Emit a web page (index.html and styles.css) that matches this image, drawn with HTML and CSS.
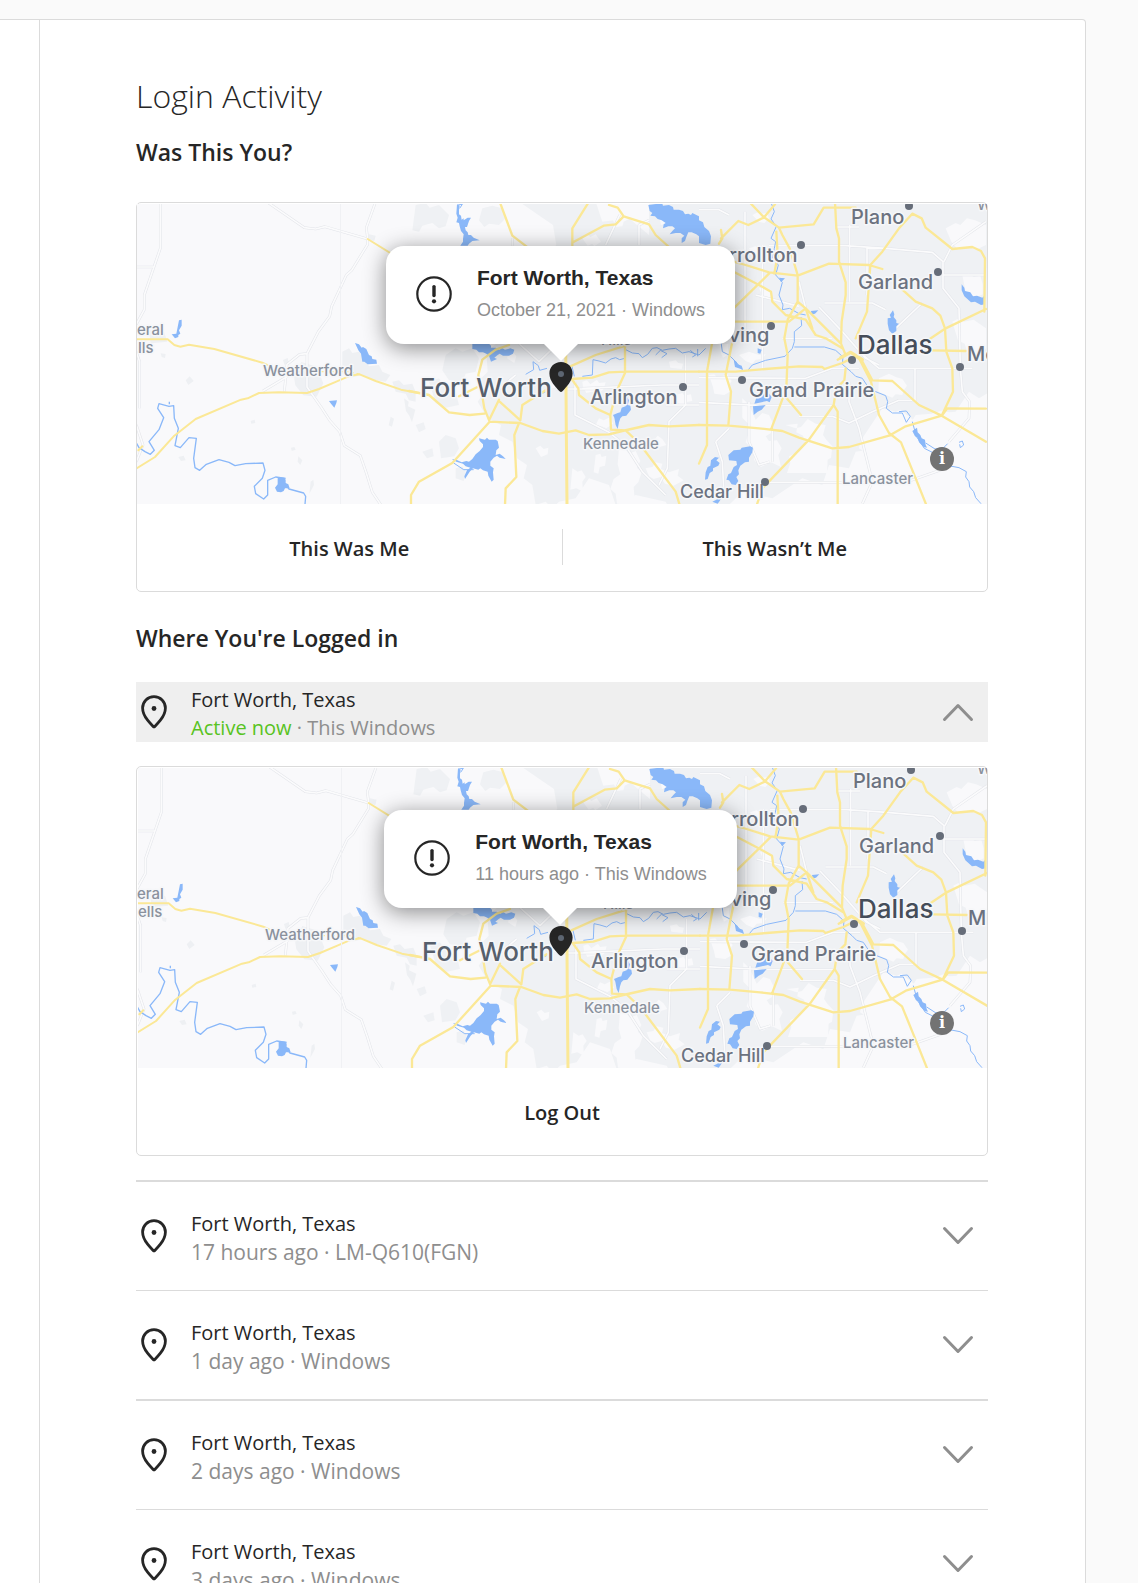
FILE: index.html
```html
<!DOCTYPE html>
<html lang="en">
<head>
  <meta charset="UTF-8" />
  <meta name="viewport" content="width=device-width, initial-scale=1" />
  <title>Login Activity</title>
  <link rel="stylesheet" href="styles.css">
</head>
<body>
  <!-- shared shapes -->
  <svg class="defs" width="0" height="0" aria-hidden="true">
    <symbol id="pin" viewBox="0 0 26 34">
      <path d="M13 1.600C6.600 1.600 1.600 6.600 1.600 13c0 4.400 2 8.400 5 12.200 2 2.600 4.200 4.800 5.600 6.200.5.500 1.100.500 1.600 0 1.400-1.400 3.600-3.600 5.600-6.200 3-3.800 5-7.800 5-12.200C24.400 6.600 19.400 1.600 13 1.600z" fill="none" stroke="#262626" stroke-width="2.800"/>
      <circle cx="13" cy="13.500" r="2.400" fill="#262626"/>
    </symbol>
    <symbol id="chevron" viewBox="0 0 32 20">
      <path d="M2.500 17.500L16 3.500l13.500 14" fill="none" stroke="#8e8e8e" stroke-width="3" stroke-linecap="round" stroke-linejoin="round"/>
    </symbol>
    <symbol id="alert" viewBox="0 0 36 36">
      <circle cx="18" cy="18" r="16.700" fill="none" stroke="#262626" stroke-width="2.200"/>
      <path d="M18 10.600v9" stroke="#262626" stroke-width="3.400" stroke-linecap="round"/>
      <circle cx="18" cy="25.300" r="2.100" fill="#262626"/>
    </symbol>
    <symbol id="marker" viewBox="0 0 24 30">
      <path d="M12 0C5.200 0 .4 5 .4 11.400c0 7.600 6.400 13.600 10.200 17.800.8.900 2 .9 2.800 0 3.800-4.200 10.200-10.200 10.200-17.800C23.600 5 18.800 0 12 0z" fill="#262626"/>
      <circle cx="12" cy="12" r="3" fill="#5d6672"/>
    </symbol>

    <symbol id="terrain" viewBox="0 0 850 300" overflow="hidden">
      <rect width="850" height="300" fill="#f9f9fb"/>

      <!-- built-up land -->
      <g transform="translate(272 -9) scale(.33333)" fill="#eff1f4">
        <path d="M330 20H560l20 60 80-10 60 50V20h1040v560l-50 30-30-20-40 60-120 10-30 50-40-10-40 60-70 10-20 50-60-10-20 60-60-20-90 60-90-20-50 50v60h-60l-30-60-60 40-30-60-90-20-60 30-20-60-60-20-40 60-50 10-20 20-20-20-30 10-10-60-26-20 10-40-30-20-14-50-40-20 6-30-40-20-30-50 20-30-20-30 30-30-4-60 50-40 10-40 60-30 20-60 30-20-20-70 60-60-10-60z"/>
        <path d="M20 30l30-6 12 14 28-8 30 30-10 34-20 6-20-16-30 8-10 18-20-4zM110 480l30-20 20 10 30-10 20 30-10 40-30 6-10 24-40-4-20-30zM60 560l30-10 20 30 30 10 10 40-40 8-30-14zM90 740l20-20 30 10 10 30-14 24-40 6zM140 820l20-6 10 14-6 30-24-8zM220 40l30-8 30 8 10 30-20 20-30-4-14 10-16-20zM20 690l24-8 6 20-20 10zM40 770l30-10 4 24-20 6z"/>
      </g>
      <g transform="translate(-8 -9) scale(.33333)" fill="#eef0f3">
        <path d="M60 405l45 5 10 30-50 5zM95 475l15 2-2 12-10-3zM170 556l12-12 12 14-16 12zM365 678l12-4 2 10-12 2zM148 786l16-4 6 14-14 2zM486 758l10-2 4 8-12 4zM508 784l12 12-6 14-8-10zM495 545l22-44 46 14 20 50-20 40-40-4-24-30zM462 495l14-6 4 16-14 4zM640 470l20-10 10 14 20-4 20 24 10 20 30-4 10 20 24 10-14 20-40-6-30-14-26 6-10-14-24 6zM790 560l20-4 14 14 26-4 10 24v30l-20-4-10-20-30-6zM785 665l10 6-6 24-10-4zM825 610l14 10-2 14 22 10-10 38-8-20-10-14zM545 860l8-6 2 16-14 26zM720 118l20 4-4 16-16-2z"/>
      </g>

      <!-- open patches inside the city -->
      <g transform="translate(272 -9) scale(.33333)" fill="#f9f9fb">
        <path d="M520 130l14-12 10 8 16-8 10 14 6 8-20 14-6-8-14 6zM520 560l14-4 10 12 20-14 6 10 20-2-6 20-16 14-20-6-16 4-10-20zM560 690l10-20 14 6 20-10 8 20-20 14-14-6zM710 820l20-4 10-14 20 4-4 16 24 10 30-10-4 20 18 14-30 16-26-6-14-20-20 6-14-8zM720 740l16-6 10-12 14 10 12 18-20 6-4 10zM630 760l20 4 10 12 20-8 14 30-10 20 14 14-10 30-14 14 4 50h-54l-4-30-16-14 10-30 20-14-8-30zM560 780l14-4 4 10 14-4-4 30-16 4-4 20-14-4zM350 130l14-4 6 10 12 6-10 22-18-10zM800 600l20-6 6 8 20-4 4 20-22 4-8 10-14-8zM490 820l16 10 12-4 12 20-10 14 2 30-20-10-18 4zM750 60l16-2 8 8 18 4-8 20-14-4-14 4zM610 70l20-14 10 4 16-10 8 20-20 10-4 14-20 2zM300 470l14 4 8 10-6 20-22-14zM780 500l20-4 8 8 14 2-4 16-34-4zM400 560l16-4 10 10 16-2-4 14-20 4zM380 760l14-8 10 10 14-4-2 20-20 8z"/>
      </g>
      <g transform="translate(562 -9) scale(.33333)" fill="#f9f9fb">
        <path d="M30 540l16-2 8 10 20-6 8-8 16 24-6 10 4 20-20 12-30-4-4-20zM130 610l20 20 20 44 20-20 20 6 14 30-8 24-16 10 10 14 24-2 14 24-10 20 8 36-30-14-30 14-20-20-6-34-20-20 10-30 4-20-24-24zM260 690l30 10 16-4 20-24 24 14 30 4-8 30 10 14 18 20-4 34-10 6-2 40H264l10-30-4-20 30-14 20-24-8-24-20-10 4-26zM120 480l30-10 30 10 20-2-10 14-20 2-10 12-20-8zM540 550l30-14 20 10 20 6 14 20-10 14-4 14-20-2-10 10-24-10-18-8zM550 640l40 10 14-6 50 40 30 20 4 36 20 14v50l-30 20-14 60-16 42H470l6-30 14-10-14-30-16-10 16-22 20-4-8-24 8-26-16-10 6-24zM790 240l20-4 14 10 20-4 7 26v30l-30 14-20-16zM760 380l20-10 14 10 30-6 37 26v60l-20 20-34-4-10-30-20-10zM690 660l40-14 30 10 40-24 61 30v264H640l6-60 24-24-4-40 20-24zM740 100l30-16 14 6 20-20 24 6 33 14v60l-30 14-24-8-30 8-20-24zM150 160l20-6 14 10 4 26-20 4-4-14zM60 440l14 8 14-2-2 34-14 8-6-14zM180 280l20-2 6 8 14 4-6 24-20-6zM160 60l20-10 8 6 16-2 6 16-14 14-16-4z"/>
      </g>

      <!-- minor roads, drawn twice for the casing -->
      <g fill="none" stroke-linejoin="round">
        <g transform="translate(-8 -9) scale(.33333)">
          <path class="casing" d="M94 20V160L46 300V344L22 388M22 216H74M416 22L526 98 560 102 588 95 716 132 712 98 740 20M716 132V148L668 226 652 240 608 334 602 364 568 410 534 476 512 478 474 508 466 590M534 476V576L576 636 602 676 632 710 646 752 694 782 712 834 730 892 756 930M474 545L402 588M22 470L32 500V640M22 690L42 750 22 800"/>
          <path class="street" d="M94 20V160L46 300V344L22 388M22 216H74M416 22L526 98 560 102 588 95 716 132 712 98 740 20M716 132V148L668 226 652 240 608 334 602 364 568 410 534 476 512 478 474 508 466 590M534 476V576L576 636 602 676 632 710 646 752 694 782 712 834 730 892 756 930M474 545L402 588M22 470L32 500V640M22 690L42 750 22 800"/>
        </g>
        <g transform="translate(272 -9) scale(.33333)">
          <path class="casing" d="M310 130V152M590 150L632 60M690 150V90L720 76M330 446L390 500 440 452M320 540L260 590M498 560V660L600 712 650 752 700 830 770 900M520 580L760 570H870M830 480V630L780 680 775 820 750 870M770 630H870M440 582H560"/>
          <path class="street" d="M310 130V152M590 150L632 60M690 150V90L720 76M330 446L390 500 440 452M320 540L260 590M498 560V660L600 712 650 752 700 830 770 900M520 580L760 570H870M830 480V630L780 680 775 820 750 870M770 630H870M440 582H560"/>
        </g>
        <g transform="translate(562 -9) scale(.33333)">
          <path class="casing" d="M0 44H60L90 60M138 50V440M190 150V520M210 152H440L560 160 700 172 732 200V280L780 340 784 520M452 90V320M504 156V300M732 240H861M735 200L760 150 861 80M0 548L320 550 400 520H480M480 470L540 520H820M648 520V620M0 622L200 632H400M300 664H400L450 684 520 650 600 616H640M450 560V620L480 700 520 860 490 926M150 620V740L180 810 212 800M220 704V800M210 862H620L740 820M784 520L790 590 812 620 810 670 750 740M300 260L320 340M360 336L430 410 500 490 540 510M376 324H520L560 344M670 324L590 400M50 740L70 800 75 900M90 700L50 740M170 300L300 334M250 430H400M410 96H480"/>
          <path class="street" d="M0 44H60L90 60M138 50V440M190 150V520M210 152H440L560 160 700 172 732 200V280L780 340 784 520M452 90V320M504 156V300M732 240H861M735 200L760 150 861 80M0 548L320 550 400 520H480M480 470L540 520H820M648 520V620M0 622L200 632H400M300 664H400L450 684 520 650 600 616H640M450 560V620L480 700 520 860 490 926M150 620V740L180 810 212 800M220 704V800M210 862H620L740 820M784 520L790 590 812 620 810 670 750 740M300 260L320 340M360 336L430 410 500 490 540 510M376 324H520L560 344M670 324L590 400M50 740L70 800 75 900M90 700L50 740M170 300L300 334M250 430H400M410 96H480"/>
        </g>
      </g>

      <!-- lakes -->
      <g fill="#8ab8f9">
        <g transform="translate(-8 -9) scale(.33333)">
          <path d="M150 376l8-2v18l-8 14 4 10-6 4 0 6-10 4-10-12 14-2 4-20zM678 444l12 4 8 10 4-2 10 6 8 18 8 4 2 8 12 2 2 12-28 2-10-8-6 0-4-24-8-10zM600 618l24-2-2 8-6 14-10-12zM446 846l20 2 4 6 0 10 8 4 4 12-14 0-4 8-8 4-12-2-6-12 8-10z"/>
        </g>
        <g transform="translate(272 -9) scale(.33333)">
          <path d="M144 28l8 4-2 12 0 14 6 4 2 12 6-4 0 6 12-8 10 0-6 10-6 18-6 0 2 10 6 6 2 8 8 0 8 8 18 8-22 2-10 8-4 6h-22l8-12 0-8 2-14-8-10-4-14-2-10-8-2 4-14-4-12zM718 30l30-4 12 0 2 6 18-2 12 6 2 8 16 0 12 4 6 10 10-2 8 4 4-6 20 10v60l-8-6-14-6-10 0-6 14-4 12-10 6 0-14 8-8-12-8-14 0-18 4 8-10 8-8-8-6-12 0-16 6 2-12 6-4-12-8-12-4-8-8-14-2 6-8-8-6zM190 446l50 0 6 6 0 6 14 0 12 6 6-6 10 6 16-4 12 4-4 12-12 6-18 0-10-6-6 4-10 8 8 4-18 8-6-18-8-6-10-4-12 0-8-8-12-2zM210 730l18 4 6-6 6 6 20 0 6 4 2 10 2 10-8 8-2 14 12-4 10 8 8 8-18-4-8-6-10 6-10 12 0 12 10 8-2 12 2 22-6 6-10-18-2-12-14-4-8-6-6 4-16-4-10 10-14 22-2-8 8-18 10-8-14-4-8-8-20-6-14-8 14 2 16 8 14-4 8 2 10-8 10-14 12-10 10-12 0-8-10-10zM654 606l6 10-4 14 8 2 2 12-14 18-12 2-6 6-4 12-4 20-6-12-4-22-4-8 14-6 8-2 4-14 12-4z"/>
        </g>
        <g transform="translate(562 -9) scale(.33333)">
          <path d="M0 76l12 6 4 14 14 12 6 16-2 22-14 4-20-6zM582 346l4 12-2 8 8 10 0 8 8 2-8 8 0 14-12 8-10-10-4-20 0-16 10-2-4-8zM788 268l8 10 2 10 16 4 8 12 12-2 16 6 8-8v28l-12 2-18-10-12 2-20-18-8-18zM336 348l22-2-10 10-10 2zM176 460l12 4-4 12-8-2zM104 494l8 6 4 8 12 4 4 12-24-8zM240 248l18 2-12 12zM188 594l14-8 16 20-6 16-8-4-38 8 6-18zM162 634l38-4-12 14-12 6-12 10zM88 780l16-14 20-2 4-6 26-4 8 4-2 14-10 16 0 12-12 2-14 10-6 14 2 12-8 8 6 12-8 12-12-2-8-12-8-2 6-16 8-4 8-18 10-6-2-12-22-2zM48 786l12 2-8 8 10 8-4 8-16 8 0 8-10 6-6 18-8 2 2-22 6-16 8-4 2-16zM40 920l12-6 10-10 8 0-8 14-6 8zM640 708l14-10 2 14 8 8 4 10 10 4 2 16 4 8-10-2-14-14-4-14-8-4z"/>
        </g>
      </g>

      <!-- rivers -->
      <g fill="none" stroke="#8ab8f9" stroke-linejoin="round">
        <g transform="translate(-8 -9) scale(.33333)" stroke-width="4">
          <path d="M20 740L30 758 48 770 64 778 76 766 60 740 90 704 104 668 86 640 90 626 120 634 134 632 136 670 148 700 138 752 154 758 180 728 202 730 194 790 198 818 212 826 232 808 270 794 300 802 318 812 350 806 402 804 408 826 400 850 376 874 380 896 404 912 416 900 416 856 440 846 470 850M466 864L480 882 524 894 530 904 528 928M121 620V628"/>
        </g>
        <g transform="translate(272 -9) scale(.33333)" stroke-width="3">
          <path d="M350 538L374 524 372 500 388 512 392 526 414 520M366 614L410 590M488 510L496 544M520 544L550 540 552 494 570 498 590 504 606 492 620 488 632 494 648 490 650 464 670 474 690 476 700 488 716 478 730 460 744 458 760 466 780 462 800 460 820 474 840 470 870 480M740 480l14-14 20 10-16 12M844 466l16 14-10 6M866 462v22M152 40l8-12-14 2M134 804l30 20 30 0"/>
        </g>
        <g transform="translate(562 -9) scale(.33333)" stroke-width="3">
          <path d="M216 22L226 50 216 72 232 94 216 130 230 140 226 160 220 190 238 210 230 240 250 262 240 300 252 330 250 344 272 340 300 356 320 360M306 366L308 392 286 410 286 440 280 460 258 484 200 496 160 510 148 524M286 456H376L410 466 432 486 430 508 456 530 470 544 490 550 510 580 530 590 560 602 566 620 562 640 580 654 610 654 622 682 634 664 622 648 600 650M640 680L652 724 676 760 700 772 730 780M680 744l28 18 26-4 12-12M748 812L780 818 802 830 800 846 810 860 812 876 824 890 830 908 846 926M780 742l10-4 4 12-10 8-2-10M66 440L70 470 90 480 110 500 130 524M0 480L20 460M66 440l12-10"/>
        </g>
      </g>

      <!-- highways -->
      <g fill="none" stroke="#fbe896" stroke-width="6" stroke-linejoin="round" stroke-linecap="round">
        <g transform="translate(-8 -9) scale(.33333)">
          <path d="M20 433H116L136 450 154 455 180 449 256 462 400 503 424 514M716 132L800 184M20 822L78 786 136 722 200 672 336 614 356 610 390 594 450 592 534 594 570 582 622 560 664 542 692 538 740 558 816 584 870 594M28 766L40 754"/>
          <path d="M505 530H660L692 538" stroke-width="4" stroke-dasharray="18 12"/>
        </g>
        <g transform="translate(272 -9) scale(.33333)" stroke-width="7">
          <path d="M0 588L60 600 120 652 182 660 226 656M150 604L210 574M272 20L310 122 360 160M540 20L490 100V152M492 142L584 92 620 88 644 64 720 88 740 120 780 156M600 30L626 38 644 64M216 580L208 540 220 494 260 464 300 450M216 580L226 640 242 680 334 684 400 708 450 716 500 706 540 720 600 718 640 708 720 690 780 694 870 690M242 680L130 804 30 860 6 900V930M242 672L270 614M272 620L334 676 340 630 410 586M330 684L316 720 322 846 290 880 288 930M484 514L560 480 650 452M488 552L550 548 600 532 650 530H870M488 552L508 580 510 600 560 640 604 660 606 704 650 706 690 744 770 850 800 890 812 930M648 450V534L622 590 604 660"/>
          <path d="M470 440L472 712 474 930" stroke-width="9"/>
        </g>
        <g transform="translate(562 -9) scale(.33333)" stroke-width="7">
          <path d="M60 146L70 130 66 105M66 130L118 78 148 90 194 68 228 28M152 22L194 66 240 98 250 120 272 160 290 220 296 240V320L266 374 256 430 266 480 262 580 240 640 216 704M240 98L344 88 374 38H470M232 110L236 180 226 236M408 22L412 100 420 130V200L440 262V300L428 380 426 446M104 200L140 210 210 232 296 242 390 206 510 210 550 222M104 230L180 270 216 290 220 320 260 360 320 374 350 420 380 430 430 460M104 340L210 236M0 380H270L320 340 426 446 440 480 416 494M296 320L320 340 340 400M640 56L600 100 550 170 514 210 504 350 470 430M640 56L668 70 680 98 760 162 820 156 846 168 858 190 856 350M610 284L650 320 700 340 724 362 738 400 742 470 760 520 762 590 728 662M861 342L740 400 680 440M695 466L800 468M0 530H110L200 522 300 514 370 516 376 522 430 504 470 484 490 500 520 556 580 558 660 630 728 662 861 740M728 662L745 640 861 641M728 662L620 694 570 722 450 756 400 760 300 728 250 708 180 700 90 692 0 690M480 490L516 560 540 660 570 714 606 742 650 850 682 930M404 630L416 650V930M404 630L330 734 190 880 174 928M440 520L436 556 412 580 404 630M40 440L24 530V750L0 806M100 440L80 540 96 590 88 692M260 606L306 660"/>
          <path d="M425 488L455 472 490 494" stroke-width="10"/>
        </g>
      </g>
      <path d="M203.500 0V300" stroke="#f0f1f4"/>
    </symbol>
  </svg>

  <div class="panel">
    <aside class="sidebar"></aside>

    <main class="content">
      <h1>Login Activity</h1>

      <h2>Was This You?</h2>
      <section class="card">
        <div class="map">
          <svg class="map-art" viewBox="0 0 850 300" preserveAspectRatio="xMidYMid slice">
            <use href="#terrain" width="850" height="300"/>
            <g class="labels">
              <text class="town" x="0" y="131">eral</text>
              <text class="town" x="1" y="149">lls</text>
              <text class="town" x="126" y="172">Weatherford</text>
              <text class="town" x="446" y="245">Kennedale</text>
              <text class="town" x="464" y="141">Hills</text>
              <text class="town" x="705" y="280">Lancaster</text>
              <text class="city" x="714" y="20">Plano</text>
              <text class="city" x="566" y="58">Carrollton</text>
              <text class="city" x="721" y="85">Garland</text>
              <text class="city" x="578" y="138">Irving</text>
              <text class="city" x="453" y="200">Arlington</text>
              <text class="city" x="612" y="193">Grand Prairie</text>
              <text class="city small" x="543" y="294">Cedar Hill</text>
              <text class="city" x="830" y="157">Me</text>
              <text class="town" x="840" y="6">Wy</text>
              <text class="metro" x="283" y="193">Fort Worth</text>
              <text class="metro dark" x="720" y="150">Dallas</text>
            </g>
            <g fill="#666d79">
              <circle cx="772" cy="2" r="4"/><circle cx="664" cy="41" r="4"/>
              <circle cx="801" cy="68" r="4"/><circle cx="634" cy="122" r="4"/>
              <circle cx="715" cy="156" r="4"/><circle cx="823" cy="163" r="4"/>
              <circle cx="546" cy="183" r="4"/><circle cx="605" cy="176" r="4"/>
              <circle cx="628" cy="278" r="4"/>
            </g>
          </svg>
          <div class="callout">
            <div class="bubble">
              <svg class="icon-alert"><use href="#alert"/></svg>
              <div>
                <p class="bubble-title">Fort Worth, Texas</p>
                <p class="bubble-sub">October 21, 2021 · Windows</p>
              </div>
            </div>
            <svg class="icon-marker"><use href="#marker"/></svg>
          </div>
          <button class="info" aria-label="Map information">i</button>
        </div>
        <div class="actions">
          <button>This Was Me</button>
          <button>This Wasn’t Me</button>
        </div>
      </section>

      <h2 class="logged-in">Where You're Logged in</h2>
      <button class="session active">
        <svg class="icon-pin"><use href="#pin"/></svg>
        <span class="where">Fort Worth, Texas<span class="when"><em>Active now</em> · This Windows</span></span>
        <svg class="icon-chevron up"><use href="#chevron"/></svg>
      </button>

      <section class="card">
        <div class="map">
          <svg class="map-art" viewBox="0 0 850 300" preserveAspectRatio="xMidYMid slice">
            <use href="#terrain" x="1" width="850" height="300"/>
            <g class="labels">
              <text class="town" x="0" y="131">eral</text>
              <text class="town" x="1" y="149">ells</text>
              <text class="town" x="128" y="172">Weatherford</text>
              <text class="town" x="447" y="245">Kennedale</text>
              <text class="town" x="466" y="141">Hills</text>
              <text class="town" x="706" y="280">Lancaster</text>
              <text class="city" x="716" y="20">Plano</text>
              <text class="city" x="568" y="58">Carrollton</text>
              <text class="city" x="722" y="85">Garland</text>
              <text class="city" x="580" y="138">Irving</text>
              <text class="city" x="454" y="200">Arlington</text>
              <text class="city" x="614" y="193">Grand Prairie</text>
              <text class="city small" x="544" y="294">Cedar Hill</text>
              <text class="city" x="831" y="157">M</text>
              <text class="town" x="840" y="6">Wy</text>
              <text class="metro" x="285" y="193">Fort Worth</text>
              <text class="metro dark" x="721" y="150">Dallas</text>
            </g>
            <g fill="#666d79">
              <circle cx="774" cy="2" r="4"/><circle cx="666" cy="41" r="4"/>
              <circle cx="803" cy="68" r="4"/><circle cx="636" cy="122" r="4"/>
              <circle cx="717" cy="156" r="4"/><circle cx="825" cy="163" r="4"/>
              <circle cx="547" cy="183" r="4"/><circle cx="607" cy="176" r="4"/>
              <circle cx="630" cy="278" r="4"/>
            </g>
          </svg>
          <div class="callout">
            <div class="bubble">
              <svg class="icon-alert"><use href="#alert"/></svg>
              <div>
                <p class="bubble-title">Fort Worth, Texas</p>
                <p class="bubble-sub">11 hours ago · This Windows</p>
              </div>
            </div>
            <svg class="icon-marker"><use href="#marker"/></svg>
          </div>
          <button class="info" aria-label="Map information">i</button>
        </div>
        <div class="actions">
          <button>Log Out</button>
        </div>
      </section>

      <ul class="sessions">
        <li>
          <button class="session">
            <svg class="icon-pin"><use href="#pin"/></svg>
            <span class="where">Fort Worth, Texas<span class="when">17 hours ago · LM-Q610(FGN)</span></span>
            <svg class="icon-chevron"><use href="#chevron"/></svg>
          </button>
        </li>
        <li>
          <button class="session">
            <svg class="icon-pin"><use href="#pin"/></svg>
            <span class="where">Fort Worth, Texas<span class="when">1 day ago · Windows</span></span>
            <svg class="icon-chevron"><use href="#chevron"/></svg>
          </button>
        </li>
        <li>
          <button class="session">
            <svg class="icon-pin"><use href="#pin"/></svg>
            <span class="where">Fort Worth, Texas<span class="when">2 days ago · Windows</span></span>
            <svg class="icon-chevron"><use href="#chevron"/></svg>
          </button>
        </li>
        <li>
          <button class="session">
            <svg class="icon-pin"><use href="#pin"/></svg>
            <span class="where">Fort Worth, Texas<span class="when">3 days ago · Windows</span></span>
            <svg class="icon-chevron"><use href="#chevron"/></svg>
          </button>
        </li>
      </ul>
    </main>
  </div>
</body>
</html>
```
FILE: styles.css
```css
* {
  box-sizing: border-box;
}
body {
  margin: 0;
  height: 100vh;
  overflow: hidden;
  background-color: #fafafa;
  color: #262626;
  font-family: "Open Sans", "Noto Sans", sans-serif;
  font-size: 20px;
}
button {
  font: inherit;
  color: inherit;
  background: none;
  border: none;
  padding: 0;
  cursor: pointer;
}
p, h1, h2, ul {
  margin: 0;
  padding: 0;
}
.defs {
  position: absolute;
}
.panel {
  display: flex;
  margin: 19px 52px 0 0;
  background-color: white;
  border: 1px solid #dbdbdb;
  border-left: none;
  border-radius: 0 4px 0 0;
}
.sidebar {
  width: 40px;
  flex-shrink: 0;
  border-right: 1px solid #dbdbdb;
}
.content {
  flex: 1;
  padding: 52px 97px 0 96px;
}
h1 {
  font-size: 32px;
  line-height: 48px;
  font-weight: 300;
}
h2 {
  font-size: 23px;
  line-height: 32px;
  font-weight: 600;
  margin: 16px 0 34px;
}
h2.logged-in {
  margin: 30px 0 28px;
}

/* map card */
.card {
  border: 1px solid #dbdbdb;
  border-radius: 5px;
  padding-top: 1px;
}
.map {
  position: relative;
  height: 300px;
  overflow: hidden;
}
.map-art {
  display: block;
  width: 100%;
  height: 100%;
}
.casing {
  stroke: #e2e4e9;
  stroke-width: 8px;
}
.street {
  stroke: #fbfbfc;
  stroke-width: 5px;
}
.labels text {
  font-family: Inter, Roboto, sans-serif;
  font-weight: 500;
  paint-order: stroke;
  stroke: #f6f7f9;
  stroke-width: 3px;
  stroke-linejoin: round;
}
.labels .town {
  font-size: 15px;
  fill: #8a919d;
}
.labels .city {
  font-size: 20px;
  fill: #6b7280;
}
.labels .small {
  font-size: 18px;
}
.labels .metro {
  font-size: 26px;
  fill: #565f6c;
}
.labels .dark {
  fill: #454d59;
}
.callout {
  position: absolute;
  top: 42px;
  left: 0;
  right: 3px;
  display: flex;
  flex-direction: column;
  align-items: center;
  gap: 18px;
}
.bubble {
  position: relative;
  display: flex;
  align-items: center;
  gap: 25px;
  height: 98px;
  padding: 0 30px 2px;
  border-radius: 18px;
  background-color: white;
  box-shadow: 0 4px 22px rgba(0, 0, 0, 0.45);
  font-family: "Liberation Sans", Arial, sans-serif;
}
.bubble::after {
  content: "";
  position: absolute;
  top: 100%;
  left: 50%;
  margin-left: -17px;
  border: 17px solid transparent;
  border-top-color: white;
  border-bottom: none;
}
.bubble-title {
  font-size: 21px;
  line-height: 32px;
  font-weight: bold;
}
.bubble-sub {
  font-size: 18px;
  line-height: 32px;
  color: #8e8e8e;
}
.icon-alert {
  width: 36px;
  height: 36px;
}
.icon-marker {
  width: 24px;
  height: 30px;
}
.info {
  position: absolute;
  right: 33px;
  bottom: 33px;
  width: 24px;
  height: 24px;
  border-radius: 50%;
  background-color: #737373;
  color: white;
  font-family: "DejaVu Serif", serif;
  font-size: 16px;
  line-height: 24px;
  font-weight: bold;
}
.actions {
  display: flex;
  padding: 25px 0 26px;
}
.actions button {
  flex: 1;
  height: 36px;
  padding-top: 2px;
  font-weight: 600;
}
.actions button + button {
  border-left: 1px solid #dbdbdb;
}

/* login sessions */
.session {
  display: flex;
  align-items: center;
  width: 100%;
  height: 60px;
  padding: 0 14px 0 5px;
  text-align: left;
}
.session.active {
  background-color: #efefef;
  margin-bottom: 24px;
}
.where {
  flex: 1;
  margin-left: 24px;
  padding-top: 4px;
  line-height: 28px;
}
.when {
  display: block;
  color: #8e8e8e;
}
.sessions .when {
  font-size: 21px;
}
.when em {
  font-style: normal;
  color: #58c322;
}
.icon-pin {
  width: 26px;
  height: 34px;
}
.icon-chevron {
  width: 32px;
  height: 20px;
  transform: rotate(180deg);
}
.icon-chevron.up {
  transform: none;
}
.sessions {
  list-style: none;
  margin-top: 24px;
}
.sessions li {
  padding: 24px 0;
  border-top: 2px solid #dbdbdb;
}
.sessions li:nth-child(even) {
  border-top-width: 1px;
}
```
